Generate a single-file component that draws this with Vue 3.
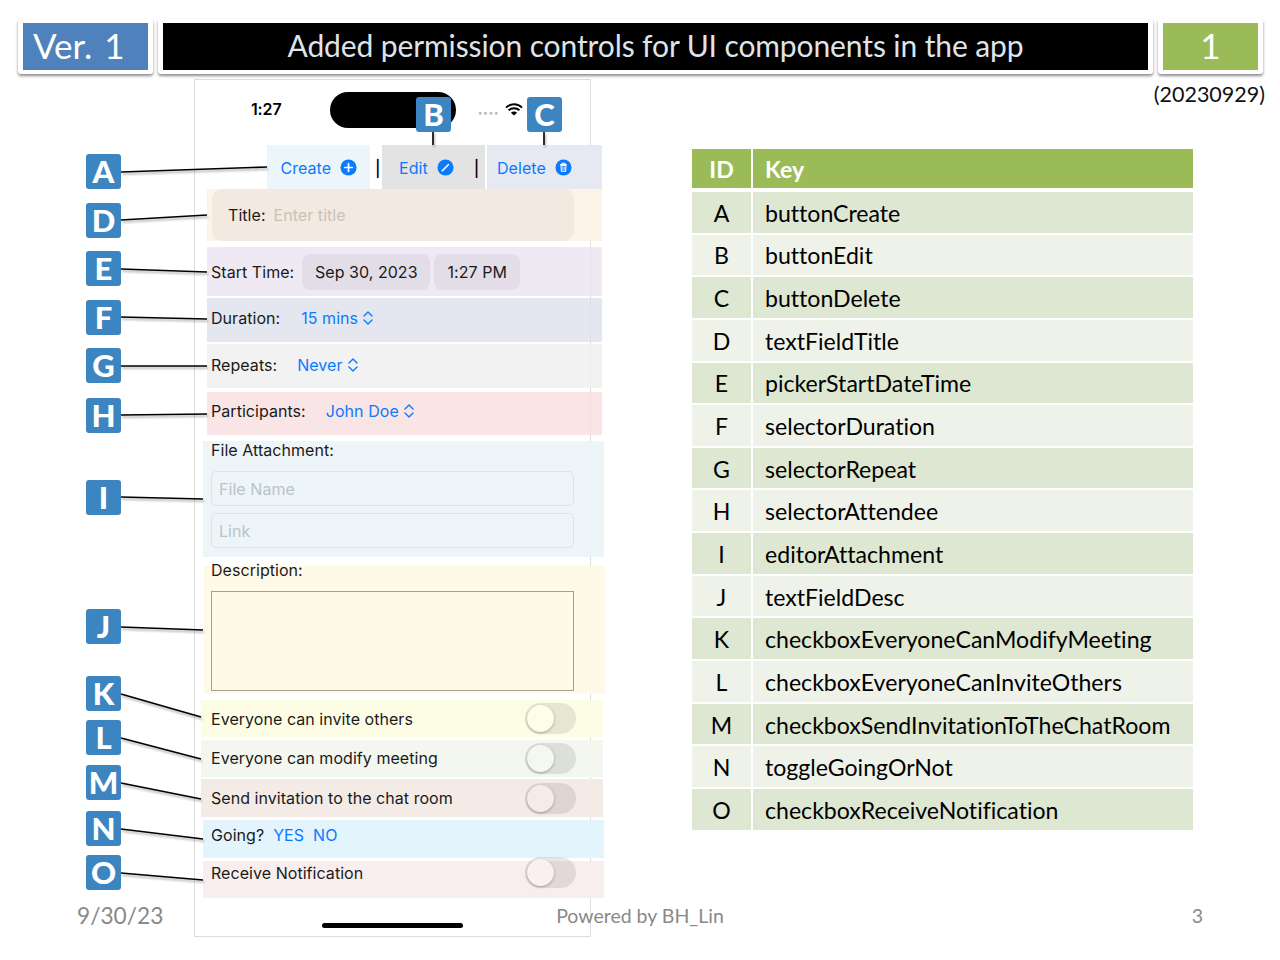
<template>
  <div class="slide">
    <header class="top">
      <div class="card card-ver"><div class="ver">Ver. 1</div></div>
      <div class="card card-title"><div class="title">Added permission controls for UI components in the app</div></div>
      <div class="card card-num"><div class="num">1</div></div>
    </header>

    <main class="body">
      <section class="phone">
        <div class="status">
          <span class="clock">1:27</span>
          <span class="island"></span>
          <span class="dots">····</span>
          <svg class="wifi" viewBox="0 0 18 13" width="18" height="13">
            <path d="M1 4.6a11.5 11.5 0 0 1 16 0M3.6 7.3a7.8 7.8 0 0 1 10.8 0" fill="none" stroke="#000" stroke-width="2" />
            <path d="M9 12.6 5.9 9.7a4.4 4.4 0 0 1 6.2 0z" fill="#000" />
          </svg>
        </div>

        <div class="toolbar">
          <div class="tool tool-create">
            Create
            <svg class="tool-icon" viewBox="0 0 18 18"><circle cx="9" cy="9" r="8.5" fill="#0a7aff" /><path d="M9 5v8M5 9h8" stroke="#fff" stroke-width="1.8" stroke-linecap="round" /></svg>
          </div>
          <span class="bar">|</span>
          <div class="tool tool-edit">
            Edit
            <svg class="tool-icon" viewBox="0 0 18 18"><circle cx="9" cy="9" r="8.5" fill="#0a7aff" /><path d="M5.6 12.4 12.2 5.8" stroke="#fff" stroke-width="1.7" stroke-linecap="round" /></svg>
            <span class="bar bar-in">|</span>
          </div>
          <div class="tool tool-delete">
            Delete
            <svg class="tool-icon" viewBox="0 0 18 18"><circle cx="9" cy="9" r="8.5" fill="#0a7aff" /><path d="M5.5 5.8h7M7.5 5.6V4.5h3v1.1M6.3 6.8l.5 6.2h4.4l.5-6.2z" fill="none" stroke="#fff" stroke-width="1.1" /><path d="M8.2 8v3.8M9.8 8v3.8" stroke="#fff" stroke-width=".8" /></svg>
          </div>
        </div>

        <div class="row-title">
          <div class="title-field"><span>Title:</span><span class="placeholder">Enter title</span></div>
        </div>

        <div class="row row-start">
          <span>Start Time:</span>
          <span class="pill pill-date">Sep 30, 2023</span>
          <span class="pill pill-time">1:27 PM</span>
        </div>

        <div v-for="s in selectors" :key="s.label" class="row" :class="s.cls">
          <span>{{ s.label }}</span>
          <span class="picker" :style="{ marginLeft: s.gap + 'px' }">
            {{ s.value }}
            <svg viewBox="0 0 10 16" width="10" height="16"><path d="M1 6l4-4 4 4M1 10l4 4 4-4" fill="none" stroke="#0a7aff" stroke-width="1.4" stroke-linecap="round" stroke-linejoin="round" /></svg>
          </span>
        </div>

        <div class="block-file">
          <div class="block-label">File Attachment:</div>
          <div class="input">File Name</div>
          <div class="input">Link</div>
        </div>

        <div class="block-desc">
          <div class="block-label">Description:</div>
          <div class="textarea"></div>
        </div>

        <div class="switch-row sw-invite">
          <span>Everyone can invite others</span><span class="toggle"><i></i></span>
        </div>
        <div class="switch-row sw-modify">
          <span>Everyone can modify meeting</span><span class="toggle"><i></i></span>
        </div>
        <div class="switch-row sw-send">
          <span>Send invitation to the chat room</span><span class="toggle"><i></i></span>
        </div>
        <div class="going">
          <span>Going?</span><span class="link link-yes">YES</span><span class="link link-no">NO</span>
        </div>
        <div class="notify">
          <span>Receive Notification</span><span class="toggle"><i></i></span>
        </div>

        <div class="home"></div>
      </section>

      <section class="side">
        <div class="date">(20230929)</div>
        <div class="table">
          <div class="thead">
            <div class="c-id">ID</div>
            <div class="c-key">Key</div>
          </div>
          <div v-for="(k, i) in keys" :key="k.id" class="tr" :class="{ alt: i % 2 }">
            <div class="c-id">{{ k.id }}</div>
            <div class="c-key">{{ k.key }}</div>
          </div>
        </div>
      </section>
    </main>

    <svg class="leaders" viewBox="0 0 1280 960" width="1280" height="960">
      <line v-for="(l, i) in lines" :key="i" :x1="l[0]" :y1="l[1]" :x2="l[2]" :y2="l[3]" stroke="#000" stroke-width="1.6" />
    </svg>
    <div v-for="c in callouts" :key="c.t" class="callout" :style="{ left: c.x + 'px', top: c.y + 'px' }">{{ c.t }}</div>

    <footer class="foot">
      <span class="foot-date">9/30/23</span>
      <span class="foot-by">Powered by BH_Lin</span>
      <span class="foot-page">3</span>
    </footer>
  </div>
</template>

<script setup>
const selectors = [
  { label: 'Duration:', value: '15 mins', gap: 21, cls: 'row-duration' },
  { label: 'Repeats:', value: 'Never', gap: 20, cls: 'row-repeats' },
  { label: 'Participants:', value: 'John Doe', gap: 20, cls: 'row-people' }
]

const keys = [
  { id: 'A', key: 'buttonCreate' },
  { id: 'B', key: 'buttonEdit' },
  { id: 'C', key: 'buttonDelete' },
  { id: 'D', key: 'textFieldTitle' },
  { id: 'E', key: 'pickerStartDateTime' },
  { id: 'F', key: 'selectorDuration' },
  { id: 'G', key: 'selectorRepeat' },
  { id: 'H', key: 'selectorAttendee' },
  { id: 'I', key: 'editorAttachment' },
  { id: 'J', key: 'textFieldDesc' },
  { id: 'K', key: 'checkboxEveryoneCanModifyMeeting' },
  { id: 'L', key: 'checkboxEveryoneCanInviteOthers' },
  { id: 'M', key: 'checkboxSendInvitationToTheChatRoom' },
  { id: 'N', key: 'toggleGoingOrNot' },
  { id: 'O', key: 'checkboxReceiveNotification' }
]

// annotation badges sit on the slide like diagram nodes
const callouts = [
  { t: 'A', x: 86, y: 154 },
  { t: 'B', x: 416, y: 97 },
  { t: 'C', x: 527, y: 97 },
  { t: 'D', x: 86, y: 203 },
  { t: 'E', x: 86, y: 251 },
  { t: 'F', x: 86, y: 300 },
  { t: 'G', x: 86, y: 348 },
  { t: 'H', x: 86, y: 398 },
  { t: 'I', x: 86, y: 480 },
  { t: 'J', x: 86, y: 609 },
  { t: 'K', x: 86, y: 676 },
  { t: 'L', x: 86, y: 720 },
  { t: 'M', x: 86, y: 765 },
  { t: 'N', x: 86, y: 811 },
  { t: 'O', x: 86, y: 855 }
]

const lines = [
  [121, 172, 267, 167],
  [433, 131, 433, 145],
  [544, 132, 544, 145],
  [121, 220, 207, 215],
  [121, 269, 207, 272],
  [121, 317, 207, 319],
  [121, 366, 207, 366],
  [121, 415, 207, 414],
  [121, 497, 203, 499],
  [121, 627, 203, 630],
  [121, 694, 201, 717],
  [121, 738, 201, 759],
  [121, 783, 201, 799],
  [121, 829, 203, 839],
  [121, 873, 203, 880]
]
</script>

<style>
html,
body {
  margin: 0;
  background: #fff;
}
</style>

<style scoped>
.slide {
  position: relative;
  width: 1280px;
  height: 960px;
  overflow: hidden;
  background: #fff;
  font-family: Inter, "Liberation Sans", sans-serif;
  color: #1a1a1a;
}

.top {
  display: flex;
  gap: 5px;
  height: 56px;
  padding: 19px 17px 0 18px;
  box-sizing: content-box;
}

.card {
  box-sizing: border-box;
  height: 55px;
  padding: 4px 5px;
  background: #fff;
  border-radius: 3px;
  box-shadow: 0 2px 3px rgba(0, 0, 0, 0.45);
  font-family: Lato, sans-serif;
  font-variant-ligatures: none;
}

.card > div {
  box-sizing: border-box;
  height: 47px;
  padding-bottom: 4px;
  display: flex;
  align-items: center;
  justify-content: center;
}

.card-ver {
  width: 135px;
}

.card-title {
  flex: 1;
}

.card-num {
  width: 105px;
}

.ver {
  background: #4f81bd;
  color: #fff;
  font-size: 35px;
  justify-content: flex-start !important;
  padding-left: 10px;
  word-spacing: 3px;
}

.title {
  background: #000;
  color: #dfe3ea;
  font-size: 30px;
  letter-spacing: -0.11px;
}

.num {
  background: #9bbb59;
  color: #fff;
  font-size: 35px;
}

.body {
  display: flex;
  align-items: flex-start;
  padding: 4px 0 0 194px;
}

/* phone screenshot */
.phone {
  box-sizing: border-box;
  width: 397px;
  height: 858px;
  border: 1px solid #dddddd;
  font-size: 16px;
  letter-spacing: 0.05px;
}

.status {
  height: 65px;
  display: flex;
  align-items: flex-start;
  padding-top: 12px;
  box-sizing: border-box;
}

.clock {
  margin: 7px 0 0 56px;
  font-size: 16px;
  font-weight: 600;
  letter-spacing: -0.15px;
  color: #000;
}

.island {
  width: 126px;
  height: 36px;
  margin-left: 49px;
  border-radius: 18px;
  background: #000;
}

.dots {
  margin: 11px 0 0 21px;
  color: #b4b4b4;
  font-size: 16px;
  font-weight: 700;
  letter-spacing: 0;
  line-height: 20px;
}

.wifi {
  margin: 11px 0 0 6px;
}

.toolbar {
  display: flex;
  height: 44px;
  margin-left: 72px;
  width: 335px;
  color: #0a7aff;
  font-size: 16px;
}

.tool {
  display: flex;
  align-items: center;
  height: 44px;
  padding-top: 1px;
}

.tool-icon {
  width: 17px;
  height: 17px;
  margin-left: 9px;
}

.tool-create {
  width: 103px;
  padding-left: 13.5px;
  box-sizing: border-box;
  background: #ecf5f9;
}

.tool-edit {
  width: 103px;
  padding-left: 17px;
  box-sizing: border-box;
  background: #e3e3e3;
}

.tool-delete {
  width: 115px;
  margin-left: 2px;
  padding-left: 10px;
  box-sizing: border-box;
  background: #e6e9f2;
}

.bar {
  width: 12px;
  padding: 1px 0 0 5px;
  box-sizing: border-box;
  color: #000;
  line-height: 44px;
  font-weight: 500;
}

.bar-in {
  width: auto;
  margin-left: 15px;
}

.row-title {
  width: 395px;
  height: 52px;
  margin-left: 12px;
  background: #fdf3e9;
}

.title-field {
  width: 362px;
  height: 52px;
  margin-left: 5px;
  padding-left: 16px;
  box-sizing: border-box;
  display: flex;
  align-items: center;
  gap: 8px;
  border-radius: 10px;
  background: #f3e9e0;
}

.placeholder {
  color: #c9c2ba;
}

.row {
  display: flex;
  align-items: center;
  width: 395px;
  margin-left: 12px;
  padding-left: 4px;
  box-sizing: border-box;
}

.row-start {
  height: 49px;
  margin-top: 6px;
  background: rgba(233, 226, 240, 0.75);
}

.pill {
  height: 36px;
  line-height: 36px;
  border-radius: 8px;
  text-align: center;
  background: #e2dde7;
}

.pill-date {
  width: 128px;
  margin-left: 8px;
}

.pill-time {
  width: 86px;
  margin-left: 4px;
}

.row-duration {
  height: 44px;
  margin-top: 2px;
  padding-bottom: 4px;
  background: rgba(223, 227, 237, 0.85);
}

.row-repeats {
  height: 44px;
  margin-top: 2px;
  padding-bottom: 2px;
  background: rgba(240, 240, 240, 0.85);
}

.row-people {
  height: 43px;
  margin-top: 4px;
  padding-bottom: 6px;
  background: rgba(248, 224, 225, 0.85);
}

.picker {
  display: flex;
  align-items: center;
  gap: 5px;
  color: #0a7aff;
}

.block-label {
  height: 20px;
  line-height: 20px;
  padding-left: 8px;
}

.block-file {
  width: 401px;
  height: 116px;
  margin: 6px 0 0 8px;
  background: rgba(236, 244, 248, 0.9);
}

.input {
  box-sizing: border-box;
  width: 363px;
  height: 35px;
  line-height: 35px;
  margin: 0 0 7px 8px;
  padding-left: 7px;
  border: 1px solid #dde4e8;
  border-radius: 5px;
  color: #bac3c8;
}

.block-file .block-label {
  line-height: 18px;
  margin-bottom: 10px;
}

.block-desc {
  width: 401px;
  height: 128px;
  margin: 9px 0 0 9px;
  background: rgba(255, 248, 228, 0.9);
}

.block-desc .block-label {
  padding-left: 7px;
  position: relative;
  top: -6px;
}

.textarea {
  box-sizing: border-box;
  width: 363px;
  height: 100px;
  margin: 5px 0 0 7px;
  border: 1.5px solid #a5a08f;
}

.switch-row,
.notify {
  display: flex;
  align-items: center;
  justify-content: space-between;
  box-sizing: border-box;
  width: 402px;
  margin-left: 6px;
  padding: 0 27px 0 10px;
}

.sw-invite {
  height: 37px;
  margin-top: 6px;
  background: #fdfde6;
}

.sw-modify {
  height: 37px;
  margin-top: 3px;
  background: #f3f7ef;
}

.sw-modify span:first-child {
  margin-top: -2px;
}

.sw-send {
  height: 38px;
  margin-top: 2px;
  background: #f4ebe7;
}

.going {
  display: flex;
  align-items: flex-start;
  box-sizing: border-box;
  width: 401px;
  height: 38px;
  margin: 3px 0 0 8px;
  padding: 5px 0 0 8px;
  background: #e4f4fd;
}

.link {
  color: #0a7aff;
}

.link-yes {
  margin-left: 9px;
}

.link-no {
  margin-left: 9px;
}

.notify {
  align-items: flex-start;
  width: 401px;
  height: 37px;
  margin: 3px 0 0 8px;
  padding: 2px 28px 0 8px;
  background: #f9eeee;
}

.toggle {
  position: relative;
  flex: none;
  width: 51px;
  height: 31px;
  border-radius: 16px;
  background: rgba(0, 0, 0, 0.09);
}

.notify .toggle {
  margin-top: -6px;
}

.toggle i {
  position: absolute;
  left: 2px;
  top: 2px;
  width: 27px;
  height: 27px;
  border-radius: 50%;
  background: #fff;
  box-shadow: 0 1px 3px rgba(0, 0, 0, 0.3);
}

.sw-invite .toggle i {
  background: #fdfde8;
}

.sw-modify .toggle i {
  background: #f4f8f0;
}

.sw-send .toggle i {
  background: #f5ece8;
}

.notify .toggle i {
  background: #faf0f0;
}

.home {
  width: 141px;
  height: 5px;
  margin: 25px 0 0 127px;
  border-radius: 3px;
  background: #000;
}

/* table */
.side {
  width: 573px;
  margin-left: 101px;
  font-family: Lato, sans-serif;
  font-variant-ligatures: none;
}

.date {
  height: 30px;
  line-height: 30px;
  text-align: right;
  font-size: 21.5px;
  color: #111;
}

.table {
  width: 501px;
  margin-top: 40px;
  font-size: 23.1px;
  color: #000;
}

.thead,
.tr {
  display: grid;
  grid-template-columns: 59px 1fr;
  column-gap: 2px;
  align-items: stretch;
}

.thead {
  height: 39px;
  margin-bottom: 4px;
  font-weight: 700;
  color: #fff;
}

.tr {
  height: 40.65px;
  margin-bottom: 2px;
}

.c-id,
.c-key {
  display: flex;
  align-items: center;
}

.tr .c-id,
.tr .c-key {
  padding-top: 1px;
  box-sizing: border-box;
}

.c-id {
  justify-content: center;
}

.c-key {
  padding-left: 12px;
}

.thead div {
  background: #9bbb59;
}

.tr div {
  background: #dee7d1;
}

.tr.alt div {
  background: #eff2e9;
}

/* annotations */
.leaders {
  position: absolute;
  left: 0;
  top: 0;
  pointer-events: none;
  filter: drop-shadow(1px 2px 1px rgba(0, 0, 0, 0.35));
}

.callout {
  position: absolute;
  width: 35px;
  height: 35px;
  border-radius: 3px;
  background: #3d85c0;
  color: #fff;
  font-family: Lato, sans-serif;
  font-size: 31px;
  font-weight: 900;
  line-height: 35px;
  text-align: center;
}

.foot {
  position: absolute;
  left: 77px;
  right: 77px;
  top: 902px;
  display: grid;
  grid-template-columns: 1fr auto 1fr;
  align-items: center;
  font-family: Lato, sans-serif;
  color: #898989;
}

.foot-date {
  font-size: 22.7px;
}

.foot-by {
  font-size: 19.5px;
}

.foot-page {
  font-size: 19.5px;
  text-align: right;
}
</style>
